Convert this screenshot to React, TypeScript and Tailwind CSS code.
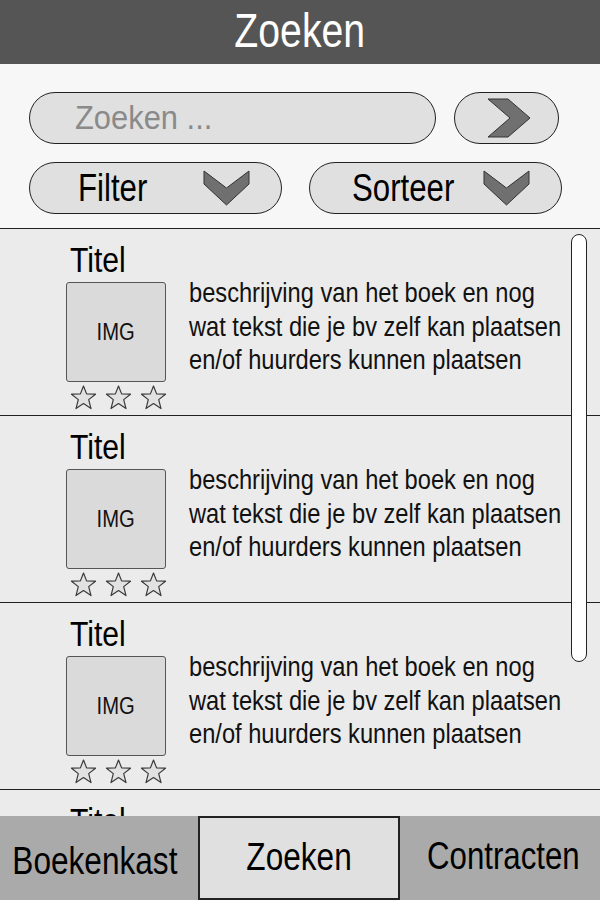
import React from "react";

const font = { fontFamily: '"Liberation Sans", Arial, sans-serif' };

function ChevronRight() {
  return (
    <svg width="44" height="40" viewBox="0 0 44 40">
      <polygon points="1,1 21,1 43,20 21,39 1,39 23,20" fill="#707070" stroke="#333" strokeWidth="1" />
    </svg>
  );
}

function ChevronDown() {
  return (
    <svg width="47" height="36" viewBox="0 0 47 36">
      <polygon points="1,1 23.5,18 46,1 46,14 23.5,35 1,14" fill="#707070" stroke="#333" strokeWidth="1" />
    </svg>
  );
}

function Star() {
  return (
    <svg width="27" height="25" viewBox="0 0 27 25">
      <polygon
        points="13.5,1 16.6,8.9 25.5,9.2 18.7,14.6 21,23.6 13.5,18.6 6,23.6 8.3,14.6 1.5,9.2 10.4,8.9"
        fill="#e2e2e2"
        stroke="#3a3a3a"
        strokeWidth="1.2"
        strokeLinejoin="round"
      />
    </svg>
  );
}

function Item() {
  return (
    <div className="h-[187px] shrink-0 border-b border-[#222] pl-[66px] pt-[11px]">
      <div className="pl-[4px] text-[35px] leading-[40px] text-black">
        <span className="inline-block origin-left scale-x-[0.86]">Titel</span>
      </div>
      <div className="mt-[2px] flex">
        <div className="flex shrink-0 flex-col">
          <div className="flex h-[100px] w-[100px] items-center justify-center rounded-[3px] border border-[#555] bg-[#dadada] text-[23px] text-[#111]">
            <span className="inline-block scale-x-[0.88]">IMG</span>
          </div>
          <div className="mt-[3px] flex gap-[8px] pl-[4px]">
            <Star />
            <Star />
            <Star />
          </div>
        </div>
        <div className="ml-[22px] mt-[-6px] origin-left scale-x-[0.86] whitespace-nowrap text-[27.5px] leading-[33.5px] text-[#111]">
          beschrijving van het boek en nog
          <br />
          wat tekst die je bv zelf kan plaatsen
          <br />
          en/of huurders kunnen plaatsen
        </div>
      </div>
    </div>
  );
}

export default function App() {
  return (
    <div className="flex h-[900px] w-[600px] flex-col overflow-hidden bg-[#f7f7f7]" style={font}>
      <div className="flex h-16 shrink-0 items-center justify-center bg-[#555555] pb-[2px] text-[49px] text-white">
        <span className="inline-block scale-x-[0.8]">Zoeken</span>
      </div>

      <div className="flex h-[165px] shrink-0 flex-col gap-[18px] border-b border-[#222] bg-[#f7f7f7] pl-[29px] pt-[28px]">
        <div className="flex gap-[18px]">
          <div className="flex h-[52px] w-[407px] items-center rounded-full border border-[#222] bg-[#e0e0e0] pl-[45px] text-[32.5px] text-[#8a8a8a]">
            <span className="inline-block origin-left scale-x-[0.95]">Zoeken ...</span>
          </div>
          <div className="flex h-[52px] w-[105px] items-center justify-center rounded-full border border-[#222] bg-[#e0e0e0] pl-[4px]">
            <ChevronRight />
          </div>
        </div>
        <div className="flex gap-[27px]">
          <div className="flex h-[52px] w-[253px] items-center rounded-full border border-[#222] bg-[#e0e0e0] pl-[48px] pr-[31px] text-[39px] text-black">
            <span className="inline-block flex-1 origin-left scale-x-[0.8]">Filter</span>
            <ChevronDown />
          </div>
          <div className="flex h-[52px] w-[253px] items-center rounded-full border border-[#222] bg-[#e0e0e0] pl-[42px] pr-[31px] text-[39px] text-black">
            <span className="inline-block flex-1 origin-left scale-x-[0.8]">Sorteer</span>
            <ChevronDown />
          </div>
        </div>
      </div>

      <div className="relative flex flex-1 flex-col overflow-hidden bg-[#ebebeb]">
        <Item />
        <Item />
        <Item />
        <Item />
        <div className="absolute right-[13px] top-[5px] h-[428px] w-[16px] rounded-full border border-[#222] bg-white" />
      </div>

      <div className="flex h-[84px] shrink-0 text-[39px] text-black">
        <div className="flex w-[198px] items-center justify-center bg-[#aaaaaa] pr-[8px] pt-[6px]">
          <span className="inline-block whitespace-nowrap scale-x-[0.81]">Boekenkast</span>
        </div>
        <div className="flex w-[202px] items-center justify-center border-2 border-[#222] bg-[#e0e0e0] pb-[2px]">
          <span className="inline-block whitespace-nowrap scale-x-[0.81]">Zoeken</span>
        </div>
        <div className="flex w-[200px] items-center justify-center bg-[#aaaaaa] pb-[4px] pl-[6px]">
          <span className="inline-block whitespace-nowrap scale-x-[0.8]">Contracten</span>
        </div>
      </div>
    </div>
  );
}
